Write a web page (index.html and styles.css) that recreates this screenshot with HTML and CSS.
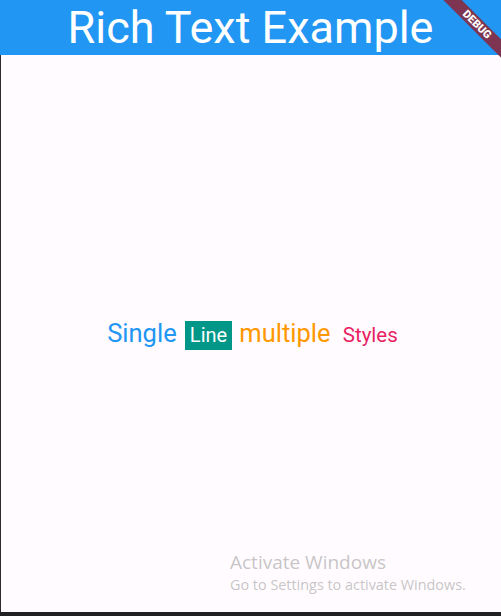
FILE: index.html
```html
<!DOCTYPE html>
<html>
<head>
<meta charset="utf-8">
<link rel="stylesheet" href="styles.css">
</head>
<body>
<div class="window">
  <div class="edge"></div>
  <div class="app">
    <header class="appbar"><h1 class="title">Rich Text Example</h1></header>
    <main class="content">
      <p class="rich"><span class="single">Single</span> <span class="line">Line</span> <span class="multiple">multiple</span> <span class="styles">Styles</span></p>
    </main>
  </div>
</div>
<div class="taskbar"></div>
<div class="banner">DEBUG</div>
<div class="watermark">
  <div class="wm-title">Activate Windows</div>
  <div class="wm-sub">Go to Settings to activate Windows.</div>
</div>
</body>
</html>
```
FILE: styles.css
```css
html, body {
  margin: 0;
  padding: 0;
  width: 501px;
  height: 616px;
  overflow: hidden;
  background: #202020;
  font-family: Roboto, "Noto Sans", sans-serif;
}
.window {
  display: flex;
  height: 612px;
}
.edge {
  width: 1px;
  background: #2b2b2b;
}
.app {
  flex: 1;
  display: flex;
  flex-direction: column;
  background: #fffbfe;
}
.appbar {
  height: 55px;
  background: #2196f3;
  display: flex;
  align-items: center;
  justify-content: center;
  margin-left: -1px;
}
.title {
  margin: 0;
  color: #ffffff;
  font-weight: 400;
  font-size: 45px;
  line-height: 55px;
}
.content {
  flex: 1;
  display: flex;
  align-items: center;
  justify-content: center;
  padding-left: 3px;
}
.rich {
  margin: 0;
  font-size: 25px;
  white-space: pre;
}
.single { color: #2196f3; font-size: 25.5px; }
.line {
  display: inline-block;
  background: #009688;
  color: #ffffff;
  font-size: 20px;
  line-height: 23px;
  padding: 3px 5px;
  margin: 0 1px 0 2px;
}
.multiple { color: #ff9800; font-size: 25.5px; }
.styles { color: #e91e63; font-size: 20.5px; padding-left: 6px; }
.taskbar {
  height: 4px;
  background: #202020;
}
.banner {
  position: absolute;
  left: 435px;
  top: 18px;
  width: 84px;
  height: 13px;
  background: #7d3552;
  color: #fff;
  font-family: Roboto, sans-serif;
  font-weight: 900;
  font-size: 11px;
  line-height: 13px;
  text-align: center;
  transform: rotate(45deg);
}
.watermark {
  position: absolute;
  left: 230px;
  top: 550px;
  font-family: "Open Sans", "Noto Sans", sans-serif;
  color: rgba(150, 150, 150, 0.55);
}
.wm-title { font-size: 19px; line-height: 25px; }
.wm-sub { font-size: 14.4px; line-height: 19px; }
```
